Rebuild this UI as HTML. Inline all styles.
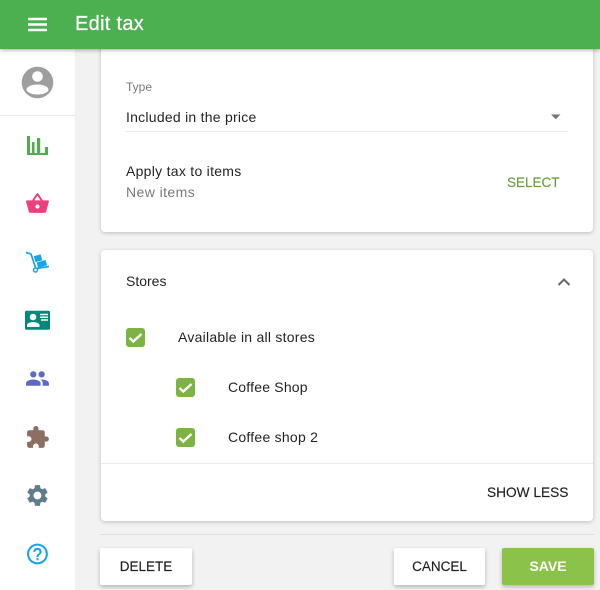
<!DOCTYPE html>
<html lang="en">
<head>
<meta charset="utf-8">
<title>Edit tax</title>
<style>
html,body{margin:0;padding:0}
body{width:600px;height:590px;overflow:hidden;position:relative;background:#f2f2f2;font-family:"Liberation Sans",sans-serif;color:rgba(0,0,0,.87)}
.side{position:absolute;left:0;top:0;width:75px;height:590px;background:#fff}
.sh{position:absolute;left:75px;top:49px;width:1px;height:541px;background:#eee}
.top{position:absolute;left:0;top:0;width:600px;height:49px;background:#4caf50;box-shadow:0 1px 4px rgba(0,0,0,.35);z-index:3}
.title{position:absolute;left:75px;top:12px;font-size:20px;line-height:24px;color:#fff;white-space:nowrap;letter-spacing:.3px;-webkit-text-stroke:.25px #fff}
.card{position:absolute;background:#fff;border-radius:4px;box-shadow:0 1px 4px rgba(0,0,0,.22)}
.t{position:absolute;white-space:nowrap;font-size:14px;line-height:20px;letter-spacing:.25px}
.g{color:rgba(0,0,0,.54)}
.line{position:absolute;height:1px;background:#e9e9e9}
.btn{position:absolute;top:548px;height:37px;line-height:37px;text-align:center;border-radius:2px;background:#fff;box-shadow:0 2px 4px rgba(0,0,0,.25);font-size:13.5px;white-space:nowrap;-webkit-text-stroke:.15px currentColor}
.ck{position:absolute;width:19px;height:19px;border-radius:3px;background:#7cb342}
.ck svg{position:absolute;left:0;top:0}
svg.abs{position:absolute;left:0;top:0;z-index:2}
</style>
</head>
<body>
<div class="side"></div>
<div class="sh"></div>
<div class="line" style="left:0;top:115px;width:75px"></div>

<div class="card" style="left:101px;top:20px;width:492px;height:212px"></div>
<div class="t g" style="left:126px;top:78px;font-size:12px;line-height:18px;letter-spacing:0">Type</div>
<div class="t" style="left:126px;top:107px">Included in the price</div>
<div class="line" style="left:126px;top:131px;width:442px"></div>
<div class="t" style="left:126px;top:161px;letter-spacing:.28px">Apply tax to items</div>
<div class="t g" style="left:126px;top:182px;letter-spacing:.42px">New items</div>
<div class="t" style="left:507px;top:173px;color:#689f38;font-size:13.5px;letter-spacing:0;-webkit-text-stroke:.15px #689f38">SELECT</div>

<div class="card" style="left:101px;top:250px;width:492px;height:271px"></div>
<div class="t" style="left:126px;top:271px;letter-spacing:0">Stores</div>
<div class="ck" style="left:126px;top:328px"><svg width="19" height="19" viewBox="0 0 19 19"><path d="M3.500 10l3.800 3.500L15.500 6" fill="none" stroke="#fff" stroke-width="2.400"/></svg></div>
<div class="t" style="left:178px;top:327px">Available in all stores</div>
<div class="ck" style="left:176px;top:378px"><svg width="19" height="19" viewBox="0 0 19 19"><path d="M3.500 10l3.800 3.500L15.500 6" fill="none" stroke="#fff" stroke-width="2.400"/></svg></div>
<div class="t" style="left:228px;top:377px;letter-spacing:.2px">Coffee Shop</div>
<div class="ck" style="left:176px;top:428px"><svg width="19" height="19" viewBox="0 0 19 19"><path d="M3.500 10l3.800 3.500L15.500 6" fill="none" stroke="#fff" stroke-width="2.400"/></svg></div>
<div class="t" style="left:228px;top:427px">Coffee shop 2</div>
<div class="line" style="left:101px;top:463px;width:492px"></div>
<div class="t" style="left:487px;top:483px;font-size:13.7px;letter-spacing:0;-webkit-text-stroke:.15px rgba(0,0,0,.87)">SHOW LESS</div>

<div class="line" style="left:100px;top:534px;width:494px;background:#dedede"></div>
<div class="btn" style="left:100px;width:92px">DELETE</div>
<div class="btn" style="left:394px;width:91px">CANCEL</div>
<div class="btn" style="left:502px;width:92px;background:#8bc34a;color:#fff;font-size:14px;font-weight:bold;-webkit-text-stroke:0">SAVE</div>

<div class="top"><div class="title">Edit tax</div></div>

<svg class="abs" width="600" height="590" viewBox="0 0 600 590" style="z-index:4">
<!-- hamburger -->
<path d="M28 17.800h19v2.400H28zM28 23.300h19v2.400H28zM28 28.800h19v2.400H28z" fill="#fff"/>
<!-- account -->
<circle cx="37.500" cy="82.500" r="15.800" fill="#9e9e9e"/>
<circle cx="37.500" cy="76.500" r="5.300" fill="#fff"/>
<ellipse cx="37.500" cy="89.500" rx="11" ry="5" fill="#fff"/>
<!-- chart -->
<path d="M27 136h3v17h2v-11h2.500v11H37v-15h3.200v15h4.800v-6h3v8H27z" fill="#4caf50"/>
<!-- basket -->
<g transform="translate(25 191) scale(1.040)" fill="#ec407a"><path d="M17.210 9l-4.380-6.560c-.19-.28-.51-.42-.83-.42-.32 0-.64.14-.83.43L6.790 9H2c-.55 0-1 .45-1 1 0 .09.010.18.040.27l2.540 9.270c.23.84 1 1.460 1.920 1.460h13c.92 0 1.690-.62 1.930-1.460l2.540-9.270L23 10c0-.55-.45-1-1-1h-4.790zM9 9l3-4.400L15 9H9zm3 8c-1.100 0-2-.9-2-2s.9-2 2-2 2 .9 2 2-.9 2-2 2z"/></g>
<!-- dolly -->
<g fill="#1aa3ec">
<path d="M26 252.500l5 1.500 4.800 14.500 13.200-2" fill="none" stroke="#1aa3ec" stroke-width="1.700"/>
<path d="M33.800 256.300l6.800-1.900 1.700 5.800-6.800 1.900zM36.500 262.500l9-2.500 1.700 5.300-9 2.500z"/>
<circle cx="35.500" cy="270" r="2" fill="#fff" stroke="#1aa3ec" stroke-width="1.500"/>
</g>
<!-- contact card -->
<rect x="25" y="310.700" width="25" height="19" rx="1.500" fill="#00897b"/>
<circle cx="33" cy="317" r="3.300" fill="#fff"/>
<path d="M27 327v-2c0-2 4-3 6-3s6.500 1 6.500 3v2z" fill="#fff"/>
<path d="M40 313.800h8v1.500h-8zM40 316.500h8v1.500h-8zM41 319.200h7v1.500h-7z" fill="#fff"/>
<!-- group -->
<g transform="translate(25 366) scale(1.040)" fill="#5c6bc0"><path d="M16 11c1.660 0 2.990-1.340 2.990-3S17.660 5 16 5c-1.660 0-3 1.340-3 3s1.340 3 3 3zm-8 0c1.660 0 2.990-1.340 2.990-3S9.660 5 8 5C6.340 5 5 6.340 5 8s1.340 3 3 3zm0 2c-2.330 0-7 1.170-7 3.500V19h14v-2.500c0-2.330-4.670-3.500-7-3.500zm8 0c-.29 0-.62.020-.97.050 1.160.84 1.970 1.970 1.970 3.450V19h6v-2.500c0-2.330-4.670-3.500-7-3.500z"/></g>
<!-- extension -->
<g transform="translate(25 425) scale(1.040)" fill="#8d6e63"><path d="M20.500 11H19V7c0-1.100-.9-2-2-2h-4V3.500C13 2.120 11.880 1 10.500 1S8 2.120 8 3.500V5H4c-1.100 0-1.990.9-1.990 2v3.800H3.500c1.490 0 2.700 1.210 2.700 2.700s-1.210 2.700-2.700 2.700H2V20c0 1.100.9 2 2 2h3.800v-1.500c0-1.490 1.210-2.700 2.700-2.700 1.490 0 2.700 1.210 2.700 2.700V22H17c1.100 0 2-.9 2-2v-4h1.500c1.380 0 2.500-1.120 2.500-2.500S21.880 11 20.500 11z"/></g>
<!-- settings -->
<g transform="translate(24.500 482.500) scale(1.080)" fill="#607d8b"><path d="M19.140 12.940c.04-.3.060-.61.060-.94 0-.32-.02-.64-.07-.94l2.030-1.580c.18-.14.23-.41.120-.61l-1.920-3.320c-.12-.22-.37-.29-.59-.22l-2.390.96c-.5-.38-1.030-.7-1.620-.94l-.36-2.540c-.04-.24-.24-.41-.48-.41h-3.840c-.24 0-.43.17-.47.41l-.36 2.540c-.59.24-1.130.57-1.620.94l-2.390-.96c-.22-.08-.47 0-.59.22L2.740 8.870c-.12.21-.08.47.12.61l2.030 1.580c-.05.3-.09.63-.09.94s.020.64.070.94l-2.030 1.580c-.18.14-.23.41-.12.61l1.920 3.320c.12.22.37.29.59.22l2.390-.96c.5.38 1.030.7 1.620.94l.36 2.540c.05.24.24.41.48.41h3.840c.24 0 .44-.17.47-.41l.36-2.540c.59-.24 1.130-.56 1.620-.94l2.390.96c.22.08.47 0 .59-.22l1.920-3.320c.12-.22.070-.47-.12-.61l-2.010-1.580zM12 15.600c-1.980 0-3.600-1.620-3.600-3.600s1.620-3.600 3.600-3.600 3.600 1.620 3.600 3.600-1.620 3.600-3.600 3.600z"/></g>
<!-- help -->
<g transform="translate(25 541.500) scale(1.040)" fill="#1aa3ec"><path d="M11 18h2v-2h-2v2zm1-16C6.480 2 2 6.480 2 12s4.480 10 10 10 10-4.480 10-10S17.520 2 12 2zm0 18c-4.410 0-8-3.590-8-8s3.590-8 8-8 8 3.590 8 8-3.590 8-8 8zm0-14c-2.210 0-4 1.790-4 4h2c0-1.100.9-2 2-2s2 .9 2 2c0 2-3 1.750-3 5h2c0-2.250 3-2.500 3-5 0-2.210-1.790-4-4-4z"/></g>
<!-- dropdown arrow -->
<path d="M551 114.500h9.500l-4.750 4.800z" fill="#757575"/>
<!-- chevron -->
<path d="M558.500 285l5.500-5.500 5.500 5.500" fill="none" stroke="#666" stroke-width="2"/>
</svg>
</body>
</html>
